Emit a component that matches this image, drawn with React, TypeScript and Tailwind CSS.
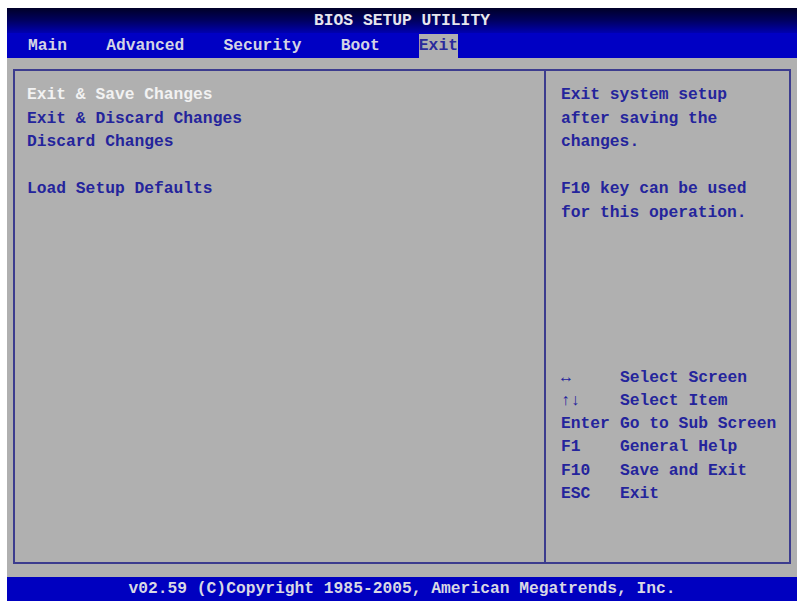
import React from 'react';

const mono = "font-['Liberation_Mono','DejaVu_Sans_Mono',monospace] text-[16.3px] leading-[23.6px] font-bold whitespace-pre";

const menuItems = [
  { label: 'Exit & Save Changes', active: true },
  { label: 'Exit & Discard Changes' },
  { label: 'Discard Changes' },
  { label: '' },
  { label: 'Load Setup Defaults' },
];

const keys: [string, string][] = [
  ['\u2194', 'Select Screen'],
  ['\u2191\u2193', 'Select Item'],
  ['Enter', 'Go to Sub Screen'],
  ['F1', 'General Help'],
  ['F10', 'Save and Exit'],
  ['ESC', 'Exit'],
];

const tabs = ['Main', 'Advanced', 'Security', 'Boot'];

export default function App() {
  return (
    <div className="w-[798px] h-[603px] bg-white pt-[8px] pl-[7px] pr-[1px] pb-[2px]">
      <div className={`h-full flex flex-col bg-[#b0b0b0] ${mono}`}>
        {/* title */}
        <div className="h-[25px] flex items-center justify-center bg-gradient-to-b from-[#000028] via-[#000060] to-[#0000b0] text-[#e6e6ee]">
          BIOS SETUP UTILITY
        </div>

        {/* tabs */}
        <div className="h-[25px] flex items-end bg-[#0000c4] pl-[21px] text-[#d4d4e4]">
          {tabs.map((t) => (
            <span key={t} className="h-[24px] leading-[24px]">{t + '    '}</span>
          ))}
          <span className="h-[24px] leading-[24px] bg-[#b0b0b0] text-[#2a2a9c]">Exit</span>
        </div>

        {/* body */}
        <div className="flex-1 px-[6px] pt-[11px] pb-[13px]">
          <div className="h-full flex border-2 border-[#3c3c8e]">
            <div className="w-[531px] border-r-2 border-[#3c3c8e] pl-[12px] pt-[12px] text-[#24249c]">
              {menuItems.map((m, i) => (
                <div key={i} className={m.active ? 'text-[#f2f2f2] h-[23.6px]' : 'h-[23.6px]'}>
                  {m.label}
                </div>
              ))}
            </div>
            <div className="flex-1 flex flex-col justify-between pl-[15px] pt-[12px] pb-[57px] text-[#24249c]">
              <div>
                <div>Exit system setup</div>
                <div>after saving the</div>
                <div>changes.</div>
                <div className="h-[23.6px]" />
                <div>F10 key can be used</div>
                <div>for this operation.</div>
              </div>
              <div className="leading-[23.2px]">
                {keys.map(([k, d]) => (
                  <div key={k} className="flex">
                    <span className="w-[59px]">{k}</span>
                    <span>{d}</span>
                  </div>
                ))}
              </div>
            </div>
          </div>
        </div>

        {/* footer */}
        <div className="h-[24px] flex items-center justify-center bg-[#0000c0] text-[#d8d8e4]">
          v02.59 (C)Copyright 1985-2005, American Megatrends, Inc.
        </div>
      </div>
    </div>
  );
}
